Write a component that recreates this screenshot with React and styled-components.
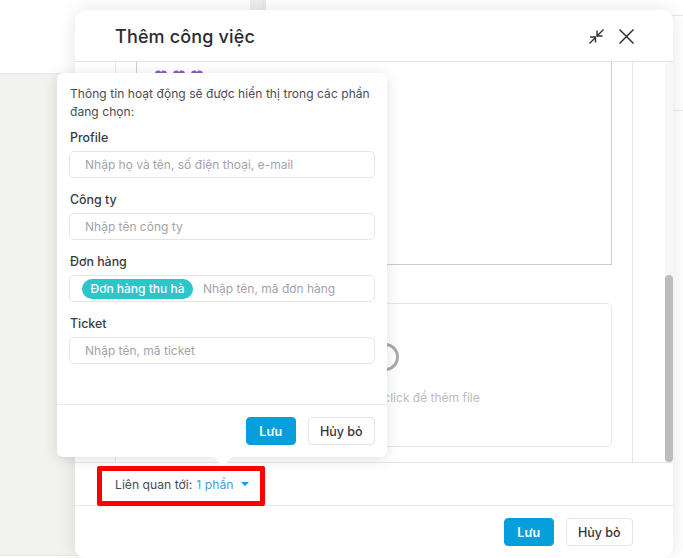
import React from 'react';
import styled, { createGlobalStyle } from 'styled-components';

const GlobalStyle = createGlobalStyle`
  html, body {
    margin: 0;
    overflow: hidden;
    background: #fff;
    font-family: Inter, "Noto Sans", sans-serif;
  }
  * {
    box-sizing: border-box;
  }
`;

const Page = styled.div`
  position: relative;
  display: grid;
  grid-template-columns: 250px 16px 1fr;
  width: 683px;
  height: 558px;
  overflow: hidden;
`;

const LeftPanel = styled.div`
  display: flex;
  flex-direction: column;
  height: 556px;
  border-bottom: 1px solid #e6e6e6;

  & > div:first-child {
    height: 74px;
    background: #fff;
    border-bottom: 1px solid #e8e8ec;
  }
  & > div:last-child {
    flex: 1;
    background: #f1f1ed;
  }
`;

const Divider = styled.div`
  background: #eeeeea;
  border-right: 4px solid #e8e8f0;
`;

const RightPanel = styled.div`
  display: flex;
  flex-direction: column;
  padding-top: 15px;

  & > div {
    height: 95px;
    border-top: 1px solid #e8e8ee;
  }
`;

const Modal = styled.div`
  position: absolute;
  left: 75px;
  top: 10px;
  width: 598px;
  height: 548px;
  display: flex;
  flex-direction: column;
  background: #fff;
  border-radius: 10px;
  box-shadow: 0 0 18px rgba(0, 0, 0, 0.1);
`;

const ModalHeader = styled.div`
  display: flex;
  align-items: center;
  height: 52px;
  padding: 1px 39px 0 40px;
  border-bottom: 1px solid #e6e6ee;
`;

const Title = styled.h2`
  flex: 1;
  margin: 0;
  font-size: 18px;
  font-weight: 500;
  letter-spacing: 0.15px;
  color: #2b2b33;
`;

const IconButton = styled.span`
  display: flex;
  margin-left: 15px;
`;

const ModalBody = styled.div`
  display: flex;
  height: 400px;
  overflow: hidden;
`;

const Scroller = styled.div`
  flex: 1;
  padding-left: 40px;
`;

const Column = styled.div`
  width: 518px;
  height: 100%;
  padding: 0 20px;
  border-left: 1px solid #e6e6ee;
  border-right: 1px solid #e6e6ee;
`;

const Editor = styled.div`
  height: 203px;
  padding: 8px 18px;
  border: 1px solid #ccc;
  border-top: 0;
`;

const Hearts = styled.div`
  display: flex;
  gap: 6px;
  color: #8e5cc4;
`;

const Dropzone = styled.div`
  height: 144px;
  margin-top: 38px;
  display: flex;
  flex-direction: column;
  align-items: center;
  padding-top: 39px;
  border: 1px solid #e6e6ee;
  border-radius: 5px;
  font-size: 12px;
  color: #bbb;
`;

const DropIcon = styled.svg`
  margin-left: 21px;
  margin-bottom: 19px;
`;

const ScrollTrack = styled.div`
  display: flex;
  flex-direction: column;
  justify-content: flex-end;
  width: 8px;
  background: #f7f7f9;
`;

const ScrollThumb = styled.div`
  height: 187px;
  background: #bdbdbd;
  border-radius: 4px;
`;

const RelatedRow = styled.div`
  position: relative;
  display: flex;
  align-items: center;
  height: 44px;
  padding: 0 40px;
  border-top: 1px solid #e6e6ee;
  border-bottom: 1px solid #e6e6ee;
  font-size: 12.2px;
  color: #4a4a55;
`;

const RelatedLink = styled.span`
  margin-left: 4px;
  color: #3d9fe0;
`;

const Caret = styled.span`
  width: 0;
  height: 0;
  margin-left: 8px;
  border-left: 4px solid transparent;
  border-right: 4px solid transparent;
  border-top: 4px solid #0a9ddb;
`;

const RedMark = styled.div`
  position: absolute;
  left: 22px;
  top: 3px;
  width: 168px;
  height: 40px;
  border: 5px solid #fe0000;
  border-radius: 2px;
`;

const Popover = styled.div`
  position: absolute;
  left: -18px;
  bottom: 48px;
  width: 330px;
  height: 384px;
  display: flex;
  flex-direction: column;
  background: #fff;
  border-radius: 6px;
  box-shadow: 0 2px 14px rgba(0, 0, 0, 0.12);

  &::after {
    content: '';
    position: absolute;
    left: 157px;
    bottom: -9px;
    border-left: 9px solid transparent;
    border-right: 9px solid transparent;
    border-top: 9px solid #fff;
  }
`;

const PopoverContent = styled.div`
  flex: 1;
  padding: 12px 12px 0 12px;
`;

const Intro = styled.p`
  margin: 0 0 8px;
  padding-left: 1px;
  font-size: 12px;
  line-height: 18px;
  letter-spacing: 0.06px;
  color: #4a4a55;
`;

const Field = styled.div`
  margin-bottom: 13px;
`;

const Label = styled.div`
  margin-bottom: 4px;
  padding-left: 1px;
  font-size: 12.4px;
  line-height: 18px;
  font-weight: 500;
  color: #3a3a42;
`;

const InputBox = styled.div`
  display: flex;
  align-items: center;
  height: 27px;
  padding-left: ${(p) => (p.$chip ? '12px' : '15px')};
  border: 1px solid #e4e4ec;
  border-radius: 5px;
`;

const TextInput = styled.input`
  flex: 1;
  min-width: 0;
  padding: 0;
  border: 0;
  outline: 0;
  font: inherit;
  font-size: 12px;
  color: #33333b;

  &::placeholder {
    color: #a3a3ab;
    opacity: 1;
  }
`;

const Chip = styled.span`
  display: flex;
  align-items: center;
  height: 20px;
  margin-right: 10px;
  padding: 0 8.5px;
  border-radius: 10px;
  background: #2cc5c9;
  font-size: 12px;
  font-weight: 500;
  color: #fff;
  white-space: nowrap;
`;

const Actions = styled.div`
  display: flex;
  justify-content: flex-end;
  gap: 12px;
  height: ${(p) => (p.$main ? '52px' : '53px')};
  padding: 12px ${(p) => (p.$main ? '40px' : '12px')} 0 0;
  border-top: ${(p) => (p.$main ? '0' : '1px solid #e6e6ee')};
`;

const Button = styled.button`
  width: ${(p) => (p.$primary ? '49.5px' : '67.5px')};
  height: 28px;
  padding: 0;
  border: 1px solid ${(p) => (p.$primary ? '#069fdc' : '#e4e4ec')};
  border-radius: 4px;
  background: ${(p) => (p.$primary ? '#069fdc' : '#fff')};
  font-family: inherit;
  font-size: 12.5px;
  font-weight: ${(p) => (p.$primary ? 600 : 500)};
  color: ${(p) => (p.$primary ? '#fff' : '#33333b')};
`;

const Heart = () => (
  <svg width="12" height="12" viewBox="0 0 12 12" fill="currentColor">
    <path d="M6 11.5 1 6.4C-.4 4.9-.3 2.600 1 1.300 2.400 0 4.600.1 6 1.900 7.400.1 9.600 0 11 1.300c1.300 1.300 1.400 3.600 0 5.100z" />
  </svg>
);

const CollapseIcon = () => (
  <svg width="15" height="15" viewBox="0 0 15 15" fill="none" stroke="#30303a" strokeWidth="1.4">
    <path d="M14.500.5 8.500 6.500M8 1.500v5.500h5.500M.5 14.500l6-6M1 8h5.500v5.500" />
  </svg>
);

const CloseIcon = () => (
  <svg width="15" height="15" viewBox="0 0 15 15" fill="none" stroke="#30303a" strokeWidth="1.5">
    <path d="M.5.500 14.500 14.500M14.500.5.500 14.500" />
  </svg>
);

function PopoverField({ label, placeholder, chip }) {
  return (
    <Field>
      <Label>{label}</Label>
      <InputBox $chip={!!chip}>
        {chip && <Chip>{chip}</Chip>}
        <TextInput placeholder={placeholder} readOnly />
      </InputBox>
    </Field>
  );
}

export default function App() {
  return (
    <>
      <GlobalStyle />
      <Page>
        <LeftPanel>
          <div />
          <div />
        </LeftPanel>
        <Divider />
        <RightPanel>
          <div />
          <div />
        </RightPanel>

        <Modal>
          <ModalHeader>
            <Title>Thêm công việc</Title>
            <IconButton>
              <CollapseIcon />
            </IconButton>
            <IconButton>
              <CloseIcon />
            </IconButton>
          </ModalHeader>

          <ModalBody>
            <Scroller>
              <Column>
                <Editor>
                  <Hearts>
                    <Heart />
                    <Heart />
                    <Heart />
                  </Hearts>
                </Editor>
                <Dropzone>
                  <DropIcon width="28" height="28" viewBox="0 0 28 28" fill="none" stroke="#aaa" strokeWidth="3">
                    <circle cx="14" cy="14" r="12.500" />
                  </DropIcon>
                  Kéo và thả file hoặc click để thêm file
                </Dropzone>
              </Column>
            </Scroller>
            <ScrollTrack>
              <ScrollThumb />
            </ScrollTrack>
          </ModalBody>

          <RelatedRow>
            Liên quan tới:
            <RelatedLink>1 phần</RelatedLink>
            <Caret />
            <RedMark />
            <Popover>
              <PopoverContent>
                <Intro>Thông tin hoạt động sẽ được hiển thị trong các phần đang chọn:</Intro>
                <PopoverField label="Profile" placeholder="Nhập họ và tên, số điện thoại, e-mail" />
                <PopoverField label="Công ty" placeholder="Nhập tên công ty" />
                <PopoverField label="Đơn hàng" placeholder="Nhập tên, mã đơn hàng" chip="Đơn hàng thu hà" />
                <PopoverField label="Ticket" placeholder="Nhập tên, mã ticket" />
              </PopoverContent>
              <Actions>
                <Button $primary>Lưu</Button>
                <Button>Hủy bỏ</Button>
              </Actions>
            </Popover>
          </RelatedRow>

          <Actions $main>
            <Button $primary>Lưu</Button>
            <Button>Hủy bỏ</Button>
          </Actions>
        </Modal>
      </Page>
    </>
  );
}
